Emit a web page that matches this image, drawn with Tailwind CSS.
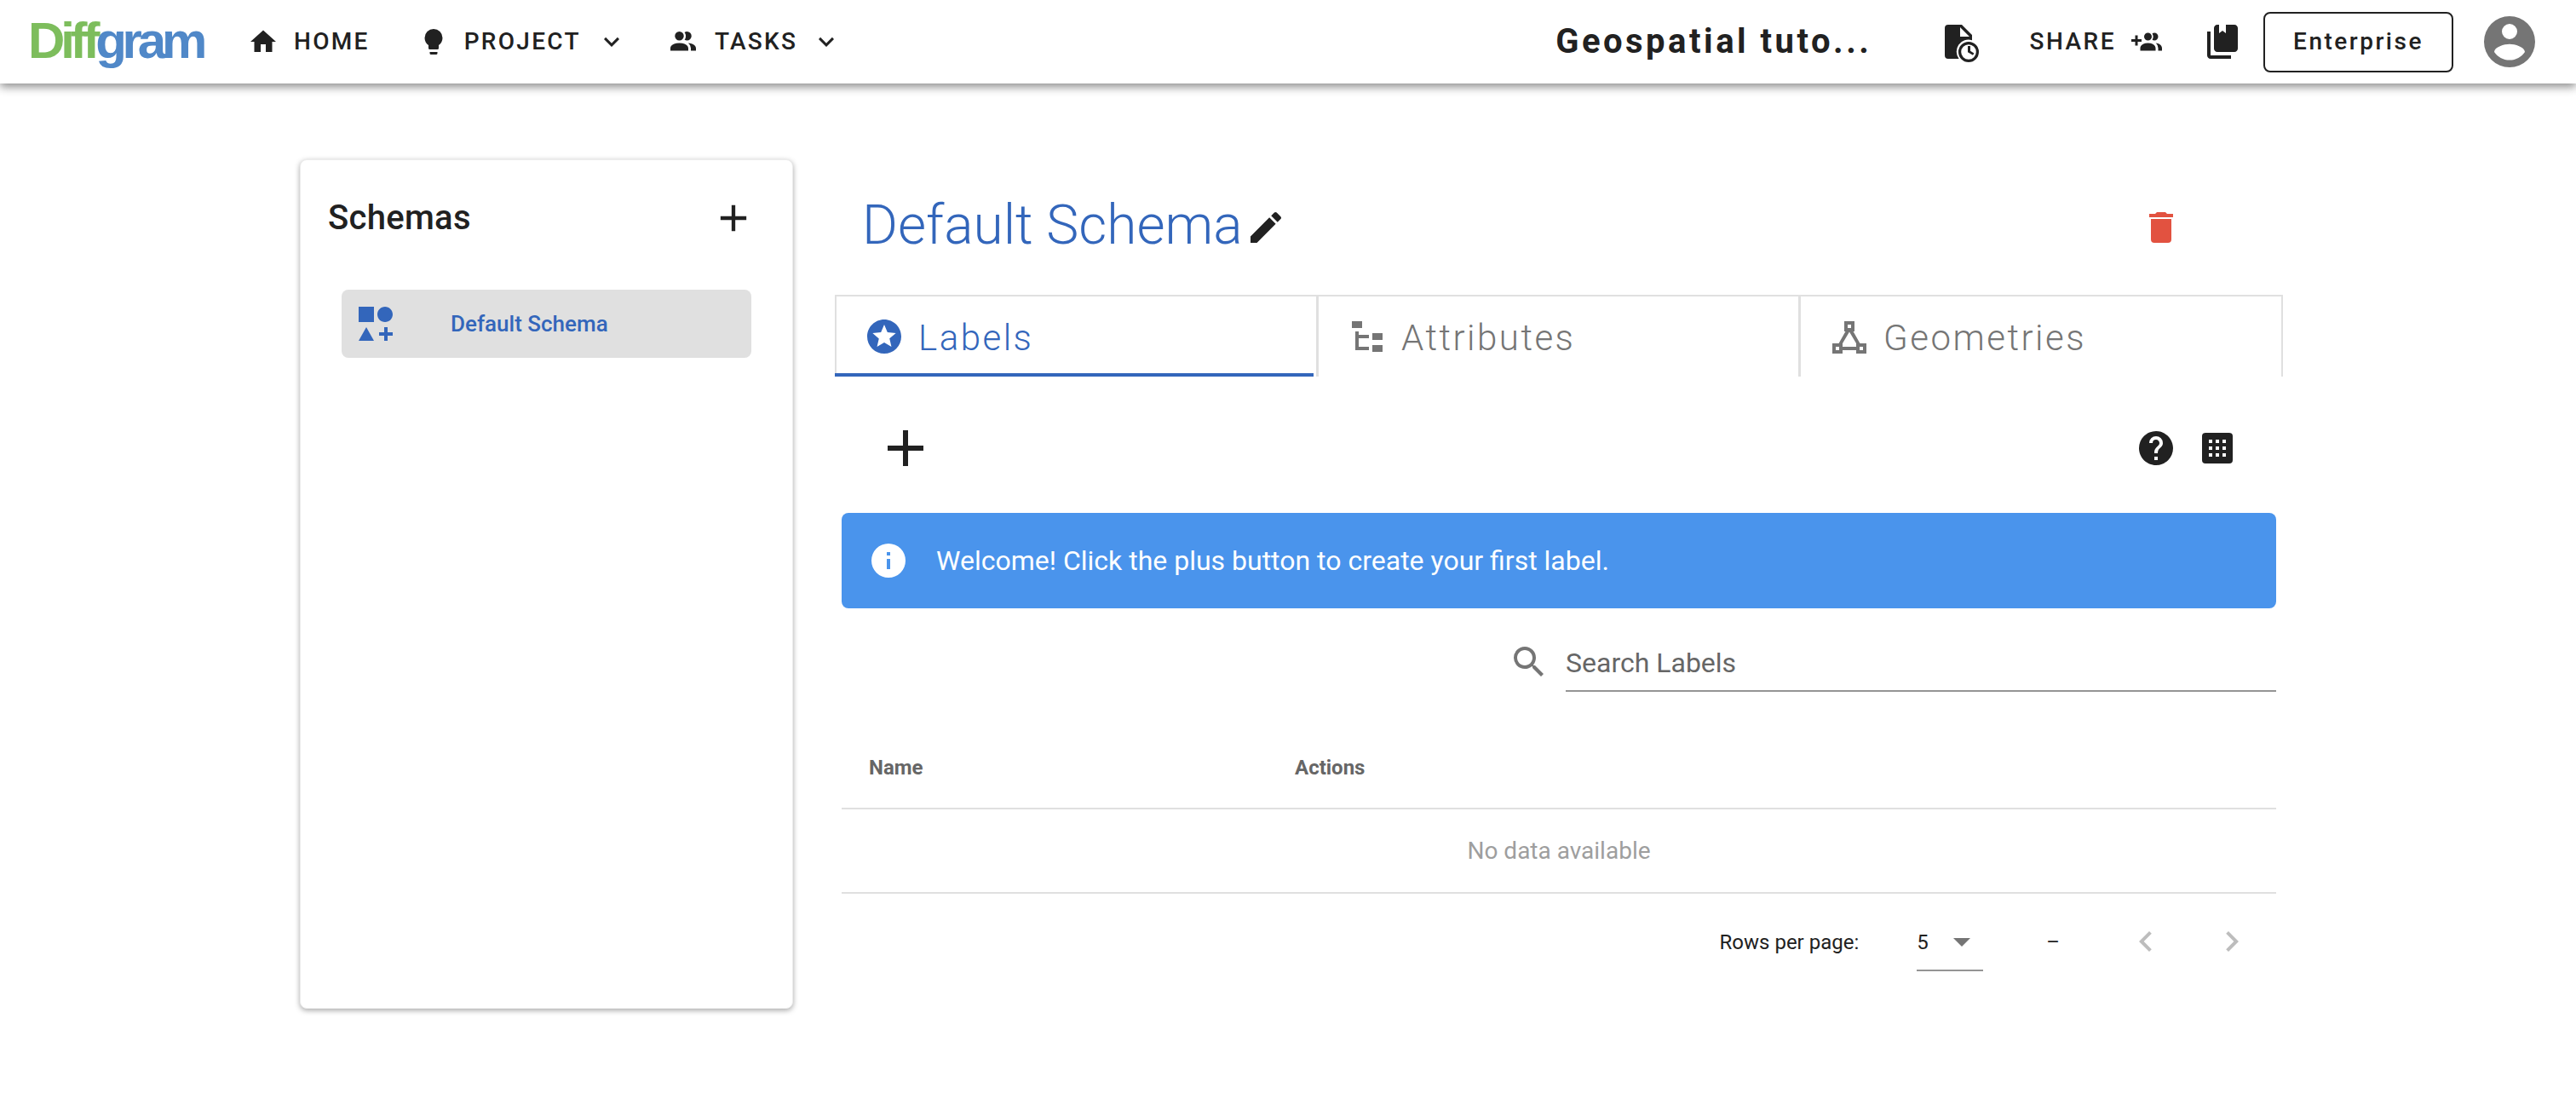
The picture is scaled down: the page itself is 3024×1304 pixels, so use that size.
<!DOCTYPE html>
<html>
<head>
<meta charset="utf-8">
<script src="https://cdn.jsdelivr.net/npm/@tailwindcss/browser@4"></script>
<title>Diffgram</title>
</head>
<body class="bg-white font-['Roboto',sans-serif] text-[#212121] w-[3024px] h-[1304px] overflow-hidden">
<header class="relative z-10 h-[98px] bg-white flex items-center pl-[33px] pr-[42px] shadow-[0_4px_10px_rgba(0,0,0,0.45)]">
  <div class="w-[205px] font-['Liberation_Sans',sans-serif] font-bold text-[60px] leading-none tracking-[-5.2px] mt-[-2px] whitespace-nowrap"><span class="text-[#7dbd5c]">Diff</span><span class="text-[#5088c8]">gram</span></div>
  <nav class="flex items-center text-[28px] font-medium tracking-[2.3px] ml-[53px]">
    <svg class="w-[36px] h-[36px]" viewBox="0 0 24 24" fill="#212121"><path d="M10,20V14H14V20H19V12H22L12,3L2,12H5V20H10Z"/></svg>
    <span class="ml-[18px]">HOME</span>
    <svg class="w-[36px] h-[36px] ml-[57px]" viewBox="0 0 24 24" fill="#212121"><path d="M12,2A7,7 0 0,0 5,9C5,11.38 6.19,13.47 8,14.74V17A1,1 0 0,0 9,18H15A1,1 0 0,0 16,17V14.74C17.81,13.47 19,11.38 19,9A7,7 0 0,0 12,2M9,21A1,1 0 0,0 10,22H14A1,1 0 0,0 15,21V20H9V21Z"/></svg>
    <span class="ml-[18px]">PROJECT</span>
    <svg class="w-[36px] h-[36px] ml-[18px]" viewBox="0 0 24 24" fill="#212121"><path d="M7.41,8.58L12,13.17L16.59,8.58L18,10L12,16L6,10L7.41,8.58Z"/></svg>
    <svg class="w-[36px] h-[36px] ml-[48px]" viewBox="0 0 24 24" fill="#212121"><path d="M16 17V19H2V17S2 13 9 13 16 17 16 17M12.5 7.5A3.5 3.5 0 1 0 9 11A3.5 3.5 0 0 0 12.5 7.5M15.94 13A5.32 5.32 0 0 1 18 17V19H22V17S22 13.37 15.94 13M15 4A3.39 3.39 0 0 0 13.07 4.59A5 5 0 0 1 13.07 10.41A3.39 3.39 0 0 0 15 11A3.5 3.5 0 0 0 15 4Z"/></svg>
    <span class="ml-[19px]">TASKS</span>
    <svg class="w-[36px] h-[36px] ml-[16px]" viewBox="0 0 24 24" fill="#212121"><path d="M7.41,8.58L12,13.17L16.59,8.58L18,10L12,16L6,10L7.41,8.58Z"/></svg>
  </nav>
  <div class="ml-auto flex items-center">
    <span class="text-[40px] font-bold tracking-[3.5px] whitespace-nowrap">Geospatial tuto...</span>
    <svg class="w-[48px] h-[48px] ml-[78px]" viewBox="0 0 24 24" fill="#212121"><path fill-rule="evenodd" d="M6 2A2 2 0 0 0 4 4V20A2 2 0 0 0 6 22H12.3A7 7 0 0 1 20 11.1V8L14 2H6ZM13 3.5L18.5 9H13V3.5Z"/><path d="M17.5 14.5H19V17.4L21.2 18.7L20.5 19.9L17.5 18.1V14.5M18 12A6 6 0 1 0 18 24A6 6 0 1 0 18 12M18 13.6A4.4 4.4 0 1 1 18 22.4A4.4 4.4 0 1 1 18 13.6Z" fill-rule="evenodd"/></svg>
    <span class="ml-[59px] text-[28px] font-medium tracking-[2.5px]">SHARE</span>
    <svg class="w-[36px] h-[36px] ml-[18px]" viewBox="0 0 24 24" fill="#212121"><path d="M19 17V19H7V17S7 13 13 13 19 17 19 17M16 8A3 3 0 1 0 13 11A3 3 0 0 0 16 8M19.2 13.06A5.6 5.6 0 0 1 21 17V19H24V17S24 13.55 19.2 13.06M18 5A2.91 2.91 0 0 0 16.39 5.5A5 5 0 0 1 16.39 10.5A2.91 2.91 0 0 0 18 11A3 3 0 0 0 18 5M8 10H5V7H3V10H0V12H3V15H5V12H8Z"/></svg>
    <svg class="w-[48px] h-[48px] ml-[47px]" viewBox="0 0 24 24" fill="#212121"><path d="M19 18H9C7.89 18 7 17.1 7 16V4C7 2.89 7.89 2 9 2H10V7L12 5.5L14 7V2H19C20.1 2 21 2.89 21 4V16C21 17.1 20.1 18 19 18M17 20V22H5C3.89 22 3 21.1 3 20V6H5V20H17Z"/></svg>
    <div class="ml-[24px] w-[223px] h-[71px] border-2 border-[#212121] rounded-[8px] flex items-center justify-center text-[28px] font-medium tracking-[2.5px]">Enterprise</div>
    <svg class="w-[72px] h-[72px] ml-[30px]" viewBox="0 0 24 24" fill="#757575"><path d="M12,19.2C9.5,19.2 7.29,17.92 6,16C6.03,14 10,12.9 12,12.9C14,12.9 17.97,14 18,16C16.71,17.92 14.5,19.2 12,19.2M12,5A3,3 0 0,1 15,8A3,3 0 0,1 12,11A3,3 0 0,1 9,8A3,3 0 0,1 12,5M12,2A10,10 0 0,0 2,12A10,10 0 0,0 12,22A10,10 0 0,0 22,12A10,10 0 0,0 12,2Z"/></svg>
  </div>
</header>

<main class="flex items-start pl-[352px] pt-[89px]">
  <aside class="w-[579px] h-[997px] bg-white rounded-[8px] border border-[#ececec] shadow-[0_2px_6px_rgba(0,0,0,0.35)]">
    <div class="h-[136px] flex items-center justify-between pl-[32px] pr-[43px]">
      <span class="text-[40px] font-medium tracking-[0.3px] leading-none">Schemas</span>
      <svg class="w-[52px] h-[52px]" viewBox="0 0 24 24" fill="#212121"><path d="M19,13H13V19H11V13H5V11H11V5H13V11H19V13Z"/></svg>
    </div>
    <div class="ml-[48px] mt-[16px] w-[481px] h-[80px] bg-[#e0e0e0] rounded-[8px] flex items-center pl-[16px]">
      <svg class="w-[48px] h-[48px]" viewBox="0 0 24 24" fill="#3366bb"><path d="M2,2H11V11H2V2M17.5,2C20,2 22,4 22,6.5C22,9 20,11 17.5,11C15,11 13,9 13,6.5C13,4 15,2 17.5,2M6.5,14L11,22H2L6.5,14M19,17H22V19H19V22H17V19H14V17H17V14H19V17Z"/></svg>
      <span class="ml-[64px] text-[26px] font-medium text-[#3366bb]">Default Schema</span>
    </div>
  </aside>

  <section class="ml-[49px] w-[1700px]">
    <div class="h-[159px] flex items-center pl-[32px] pr-[119px]">
      <span class="text-[64px] font-light text-[#3366bb] leading-none mt-[-4px]">Default Schema</span>
      <svg class="w-[48px] h-[48px] ml-[3px]" viewBox="0 0 24 24" fill="#212121"><path d="M20.71,7.04C21.1,6.65 21.1,6 20.71,5.63L18.37,3.29C18,2.9 17.35,2.9 16.96,3.29L15.12,5.12L18.87,8.87M3,17.25V21H6.75L17.81,9.93L14.06,6.18L3,17.25Z"/></svg>
      <svg class="w-[48px] h-[48px] ml-auto" viewBox="0 0 24 24" fill="#e25240"><path d="M19,4H15.5L14.5,3H9.5L8.5,4H5V6H19M6,19A2,2 0 0,0 8,21H16A2,2 0 0,0 18,19V7H6V19Z"/></svg>
    </div>

    <div class="flex h-[96px] border-t-2 border-[#e0e0e0] border-r-2 border-l-2 text-[42px] font-light tracking-[2.5px]">
      <div class="relative w-[566px] flex items-center pl-[32px] border-r-[3px] border-[#e0e0e0] text-[#3366bb]">
        <svg class="w-[48px] h-[48px]" viewBox="0 0 24 24" fill="#3366bb"><path d="M16.23,18L12,15.45L7.77,18L8.89,13.19L5.16,9.96L10.08,9.54L12,5L13.92,9.53L18.84,9.95L15.11,13.18L16.23,18M12,2C6.47,2 2,6.5 2,12A10,10 0 0,0 12,22A10,10 0 0,0 22,12C22,6.47 17.5,2 12,2Z"/></svg>
        <span class="ml-[16px] mt-[2px]">Labels</span>
        <div class="absolute left-[-2px] bottom-0 w-[562px] h-[4px] bg-[#3366bb]"></div>
      </div>
      <div class="w-[566px] flex items-center pl-[33px] border-r-[3px] border-[#e0e0e0] text-[#757575]">
        <svg class="w-[48px] h-[48px]" viewBox="0 0 24 24" fill="#757575"><path d="M3,3H9V7H3V3M15,10H21V14H15V10M15,17H21V21H15V17M13,13H7V18H13V20H7L5,20V9H7V11H13V13Z"/></svg>
        <span class="ml-[16px] mt-[2px]">Attributes</span>
      </div>
      <div class="flex-1 flex items-center pl-[33px] text-[#757575]">
        <svg class="w-[48px] h-[48px]" viewBox="0 0 24 24" fill="#757575"><path fill-rule="evenodd" d="M9,3V9H9.73L5.79,16H2V22H8V20H16V22H22V16H18.21L14.27,9H15V3H9ZM11,5H13V7H11V5ZM12,9.2L16,16V18H8V16L12,9.2ZM4,18H6V20H4V18ZM18,18H20V20H18V18Z"/></svg>
        <span class="ml-[16px] mt-[2px]">Geometries</span>
      </div>
    </div>

    <div class="mt-[24px] h-[120px] flex items-center pl-[47px] pr-[53px]">
      <svg class="w-[72px] h-[72px]" viewBox="0 0 24 24" fill="#212121"><path d="M19,13H13V19H11V13H5V11H11V5H13V11H19V13Z"/></svg>
      <svg class="w-[48px] h-[48px] ml-auto" viewBox="0 0 24 24" fill="#212121"><path d="M15.07,11.25L14.17,12.17C13.45,12.89 13,13.5 13,15H11V14.5C11,13.39 11.45,12.39 12.17,11.67L13.41,10.41C13.78,10.05 14,9.55 14,9C14,7.89 13.1,7 12,7A2,2 0 0,0 10,9H8A4,4 0 0,1 12,5A4,4 0 0,1 16,9C16,9.88 15.64,10.67 15.07,11.25M13,19H11V17H13M12,2A10,10 0 0,0 2,12C2,17.53 6.5,22 12,22A10,10 0 0,0 22,12C22,6.47 17.5,2 12,2Z"/></svg>
      <svg class="w-[48px] h-[48px] ml-[24px]" viewBox="0 0 24 24" fill="#212121"><path fill-rule="evenodd" d="M5 3H19A2 2 0 0 1 21 5V19A2 2 0 0 1 19 21H5A2 2 0 0 1 3 19V5A2 2 0 0 1 5 3ZM7 7V9H9V7H7ZM11 7V9H13V7H11ZM15 7V9H17V7H15ZM7 11V13H9V11H7ZM11 11V13H13V11H11ZM15 11V13H17V11H15ZM7 15V17H9V15H7ZM11 15V17H13V15H11ZM15 15V17H17V15H15Z"/></svg>
    </div>

    <div class="ml-[8px] mr-[8px] mt-[16px]">
      <div class="h-[112px] bg-[#4a94ec] rounded-[8px] flex items-center pl-[31px] text-white text-[32px]">
        <svg class="w-[48px] h-[48px]" viewBox="0 0 24 24" fill="#ffffff"><path d="M13,9H11V7H13M13,17H11V11H13M12,2A10,10 0 0,0 2,12A10,10 0 0,0 12,22A10,10 0 0,0 22,12A10,10 0 0,0 12,2Z"/></svg>
        <span class="ml-[32px]">Welcome! Click the plus button to create your first label.</span>
      </div>

      <div class="mt-[34px] flex items-center justify-end">
        <svg class="w-[48px] h-[48px] mb-[6px]" viewBox="0 0 24 24" fill="#757575"><path d="M9.5,3A6.5,6.5 0 0,1 16,9.5C16,11.11 15.41,12.59 14.44,13.73L14.71,14H15.5L20.5,19L19,20.5L14,15.5V14.71L13.73,14.44C12.59,15.41 11.11,16 9.5,16A6.5,6.5 0 0,1 3,9.5A6.5,6.5 0 0,1 9.5,3M9.5,5C7,5 5,7 5,9.5C5,12 7,14 9.5,14C12,14 14,12 14,9.5C14,7 12,5 9.5,5Z"/></svg>
        <div class="ml-[19px] w-[834px] h-[64px] border-b-2 border-[#949494] flex items-center pb-[2px] text-[32px] text-[#666666]">Search Labels</div>
      </div>

      <div class="mt-[40px] h-[98px] flex items-center border-b-2 border-[#e0e0e0] text-[24px] font-bold text-[#666666]">
        <span class="w-[532px] pl-[32px] mt-[1px]">Name</span>
        <span class="mt-[1px]">Actions</span>
      </div>
      <div class="h-[99px] flex items-center justify-center border-b-2 border-[#e0e0e0] text-[28px] text-[#9e9e9e]">No data available</div>

      <div class="pt-[32px] flex items-start justify-end pr-[28px] text-[24px]">
        <span class="h-[50px] flex items-center">Rows per page:</span>
        <div class="ml-[68px] w-[78px] h-[59px] border-b-2 border-[#949494] flex items-start justify-between">
          <span class="h-[50px] flex items-center">5</span>
          <svg class="w-[48px] h-[48px] mr-px" viewBox="0 0 24 24" fill="#757575"><path d="M7,10L12,15L17,10H7Z"/></svg>
        </div>
        <span class="ml-[74px] h-[50px] flex items-center">–</span>
        <svg class="w-[48px] h-[48px] ml-[77px]" viewBox="0 0 24 24" fill="#bdbdbd"><path d="M15.41,16.58L10.83,12L15.41,7.41L14,6L8,12L14,18L15.41,16.58Z"/></svg>
        <svg class="w-[48px] h-[48px] ml-[53px]" viewBox="0 0 24 24" fill="#bdbdbd"><path d="M8.59,16.58L13.17,12L8.59,7.41L10,6L16,12L10,18L8.59,16.58Z"/></svg>
      </div>
    </div>
  </section>
</main>
</body>
</html>
